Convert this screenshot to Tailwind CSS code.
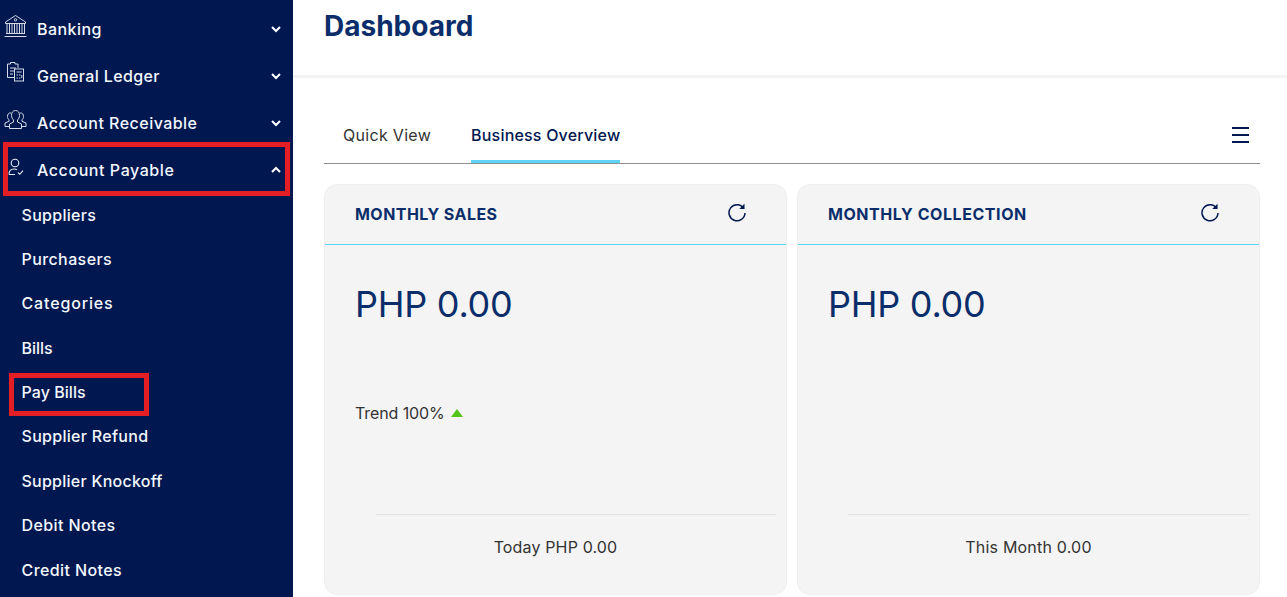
<!doctype html>
<html>

<head>
    <meta charset="UTF-8" />
    <script src="https://cdn.jsdelivr.net/npm/@tailwindcss/browser@4"></script>
</head>

<body class="h-[597px] overflow-hidden bg-white font-['Inter',sans-serif]">
    <div class="flex h-[597px]">
        <!-- sidebar -->
        <aside class="relative w-[293px] shrink-0 bg-[#00174f] text-[#f4f8ff] text-[16px] font-medium tracking-[0.3px]">
            <div class="pt-[5px]">
                <div class="flex h-[47px] items-center pl-[4px] pr-[11px]">
                    <svg class="w-[23px] h-[24px] -mt-[6px]" viewBox="0 0 23 24" fill="none" stroke="#d5dbe8" stroke-width="1">
                        <path d="M1.5 8 11.5 1.5 21.5 8V9.5H1.5Z" />
                        <circle cx="11.5" cy="5.8" r="1.2" />
                        <path d="M3 10v9M5.5 10v9M8 10v9M10.5 10v9M13 10v9M15.5 10v9M18 10v9M20.5 10v9" />
                        <path d="M2 19.5h19M.5 22.5h22" />
                    </svg>
                    <span class="ml-[10px] flex-1 tracking-[0.45px]">Banking</span>
                    <svg class="w-[12px] h-[12px]" viewBox="0 0 12 12" fill="none" stroke="white" stroke-width="2"><path d="M2 4 6 8 10 4" /></svg>
                </div>
                <div class="flex h-[47px] items-center pl-[6px] pr-[11px]">
                    <svg class="w-[19px] h-[24px] -mt-[7px]" viewBox="0 0 19 24" fill="none" stroke="#d5dbe8" stroke-width="1">
                        <path d="M8 17.5H1.5V4H4.5V2.5H9V4H12V8" />
                        <path d="M4 8h6M4 11h4M4 14h3" />
                        <rect x="8.5" y="9" width="9" height="12" />
                        <path d="M10.5 12h5M10.5 15h1.5M13 15h1.5M10.5 18h1.5M13 18h1.5M15.8 15v3" />
                    </svg>
                    <span class="ml-[12px] flex-1 tracking-[0.37px]">General Ledger</span>
                    <svg class="w-[12px] h-[12px]" viewBox="0 0 12 12" fill="none" stroke="white" stroke-width="2"><path d="M2 4 6 8 10 4" /></svg>
                </div>
                <div class="flex h-[47px] items-center pl-[4px] pr-[11px]">
                    <svg class="w-[23px] h-[22px] -mt-[6px]" viewBox="0 0 23 22" fill="none" stroke="#d5dbe8" stroke-width="1">
                        <path d="M11.5 1.5C8.5 1.5 7.5 4 7.5 6.5c0 2 1 3.500 2 4.500v2L5.500 15v4.500h12V15l-4-2v-2c1-1 2-2.500 2-4.500 0-2.500-1-5-4-5Z" />
                        <path d="M7 4C4.500 3.500 3.500 5.500 3.500 7.500c0 1.500.7 2.500 1.500 3.300v1.500L1 14v3.500h4.500" />
                        <path d="M16 4c2.500-.5 3.500 1.500 3.500 3.500 0 1.500-.7 2.500-1.500 3.300v1.500l4 1.700v3.500h-4.500" />
                    </svg>
                    <span class="ml-[10px] flex-1 tracking-[0.47px]">Account Receivable</span>
                    <svg class="w-[12px] h-[12px]" viewBox="0 0 12 12" fill="none" stroke="white" stroke-width="2"><path d="M2 4 6 8 10 4" /></svg>
                </div>
                <div class="flex h-[47px] items-center pl-[8px] pr-[11px]">
                    <svg class="w-[16px] h-[18px] -mt-[5px]" viewBox="0 0 16 18" fill="none" stroke="#e8ecf4" stroke-width="1.100">
                        <circle cx="7" cy="5" r="3.800" />
                        <path d="M1 16.500c0-3 1.800-5.500 5-5.500 1.500 0 2.500.4 3 1M1 16.500h6" />
                        <path d="M10 14.500l1.800 1.800 3.200-3.600" />
                    </svg>
                    <span class="ml-[13px] flex-1 tracking-[0.57px]">Account Payable</span>
                    <svg class="w-[12px] h-[12px] mt-[1px]" viewBox="0 0 12 12" fill="none" stroke="white" stroke-width="2"><path d="M2 8 6 4 10 8" /></svg>
                </div>
            </div>
            <nav class="flex flex-col pl-[21.5px] -mt-[0.7px]">
                <a class="flex h-[44.4px] items-center">Suppliers</a>
                <a class="flex h-[44.4px] items-center tracking-[0.4px]">Purchasers</a>
                <a class="flex h-[44.4px] items-center tracking-[0.85px]">Categories</a>
                <a class="flex h-[44.4px] items-center tracking-[0px]">Bills</a>
                <a class="flex h-[44.4px] items-center tracking-[0.05px]">Pay Bills</a>
                <a class="flex h-[44.4px] items-center">Supplier Refund</a>
                <a class="flex h-[44.4px] items-center tracking-[0.25px]">Supplier Knockoff</a>
                <a class="flex h-[44.4px] items-center tracking-[0.4px]">Debit Notes</a>
                <a class="flex h-[44.4px] items-center tracking-[0.4px]">Credit Notes</a>
            </nav>
            <!-- red annotation boxes -->
            <div class="absolute left-[3px] top-[142px] w-[287px] h-[54px] border-[5px] border-[#e31e24]"></div>
            <div class="absolute left-[9px] top-[373px] w-[140px] h-[43px] border-[5px] border-[#e31e24]"></div>
        </aside>

        <!-- main -->
        <main class="flex-1 min-w-0">
            <header class="h-[78px] border-b-[3px] border-[#f3f3f3] pl-[31px] pt-[8px]">
                <h1 class="text-[28px] leading-[36px] font-bold text-[#0b2e6b]">Dashboard</h1>
            </header>
            <div class="pl-[31px] pr-[27px]">
                <div class="flex h-[86px] items-end justify-between border-b border-[#8f8f8f]">
                    <div class="flex text-[16px]">
                        <div class="ml-[19px] h-[55px] pt-[15px] tracking-[0.3px] text-[#333333]">Quick View</div>
                        <div class="ml-[40px] h-[55px] pt-[15px] tracking-[0.2px] border-b-[3px] border-[#5fd3f5] -mb-[1px] font-medium text-[#00174f]">Business Overview</div>
                    </div>
                    <svg class="w-[18px] h-[16px] mb-[20px] mr-[10px]" viewBox="0 0 18 16" fill="none" stroke="#00174f" stroke-width="2">
                        <path d="M0 1h17M0 8h17M0 15h17" />
                    </svg>
                </div>
                <div class="mt-[20px] grid grid-cols-2 gap-[10px]">
                    <!-- monthly sales -->
                    <section class="h-[411px] rounded-[13px] border border-[#efefef] bg-[#f4f4f4] flex flex-col">
                        <div class="flex h-[60px] items-center justify-between border-b border-[#5fd3f5] pl-[30px] pr-[39px]">
                            <h2 class="-mt-[2px] text-[16px] tracking-[0.45px] font-bold text-[#0b2e6b]">MONTHLY SALES</h2>
                            <svg class="w-[20px] h-[20px] -mt-[6px]" viewBox="0 0 20 20" fill="none" stroke="#00174f" stroke-width="1.500">
                                <path d="M16.800 6.500A8 8 0 1 0 18 11" />
                                <path d="M17.500 1.800v5.200h-5.200" fill="#00174f" stroke="none" />
                            </svg>
                        </div>
                        <div class="flex-1 flex flex-col pl-[30px] pr-[10px]">
                            <p class="mt-[33px] text-[36px] tracking-[-0.25px] leading-[52px] text-[#0b2e6b]">PHP 0.00</p>
                            <p class="mt-[71px] flex items-center text-[16px] tracking-[-0.1px] leading-[24px] text-[#333333]">Trend 100%
                                <span class="ml-[6px] w-0 h-0 border-x-[6px] border-x-transparent border-b-[8px] border-b-[#52c41a]"></span>
                            </p>
                            <div class="mt-[auto] ml-[21px] border-t border-[#e3e3e3] h-[80px] flex items-center justify-center">
                                <p class="-ml-[41px] -mt-[16px] text-[16px] tracking-[0.15px] text-[#333333]">Today PHP 0.00</p>
                            </div>
                        </div>
                    </section>
                    <!-- monthly collection -->
                    <section class="h-[411px] rounded-[13px] border border-[#efefef] bg-[#f4f4f4] flex flex-col">
                        <div class="flex h-[60px] items-center justify-between border-b border-[#5fd3f5] pl-[30px] pr-[39px]">
                            <h2 class="-mt-[2px] text-[16px] tracking-[0.56px] font-bold text-[#0b2e6b]">MONTHLY COLLECTION</h2>
                            <svg class="w-[20px] h-[20px] -mt-[6px]" viewBox="0 0 20 20" fill="none" stroke="#00174f" stroke-width="1.500">
                                <path d="M16.800 6.500A8 8 0 1 0 18 11" />
                                <path d="M17.500 1.800v5.200h-5.200" fill="#00174f" stroke="none" />
                            </svg>
                        </div>
                        <div class="flex-1 flex flex-col pl-[30px] pr-[10px]">
                            <p class="mt-[33px] text-[36px] tracking-[-0.25px] leading-[52px] text-[#0b2e6b]">PHP 0.00</p>
                            <div class="mt-[auto] ml-[20px] border-t border-[#e3e3e3] h-[80px] flex items-center justify-center">
                                <p class="-ml-[40px] -mt-[16px] text-[16px] tracking-[0.2px] text-[#333333]">This Month 0.00</p>
                            </div>
                        </div>
                    </section>
                </div>
            </div>
        </main>
    </div>
</body>

</html>
